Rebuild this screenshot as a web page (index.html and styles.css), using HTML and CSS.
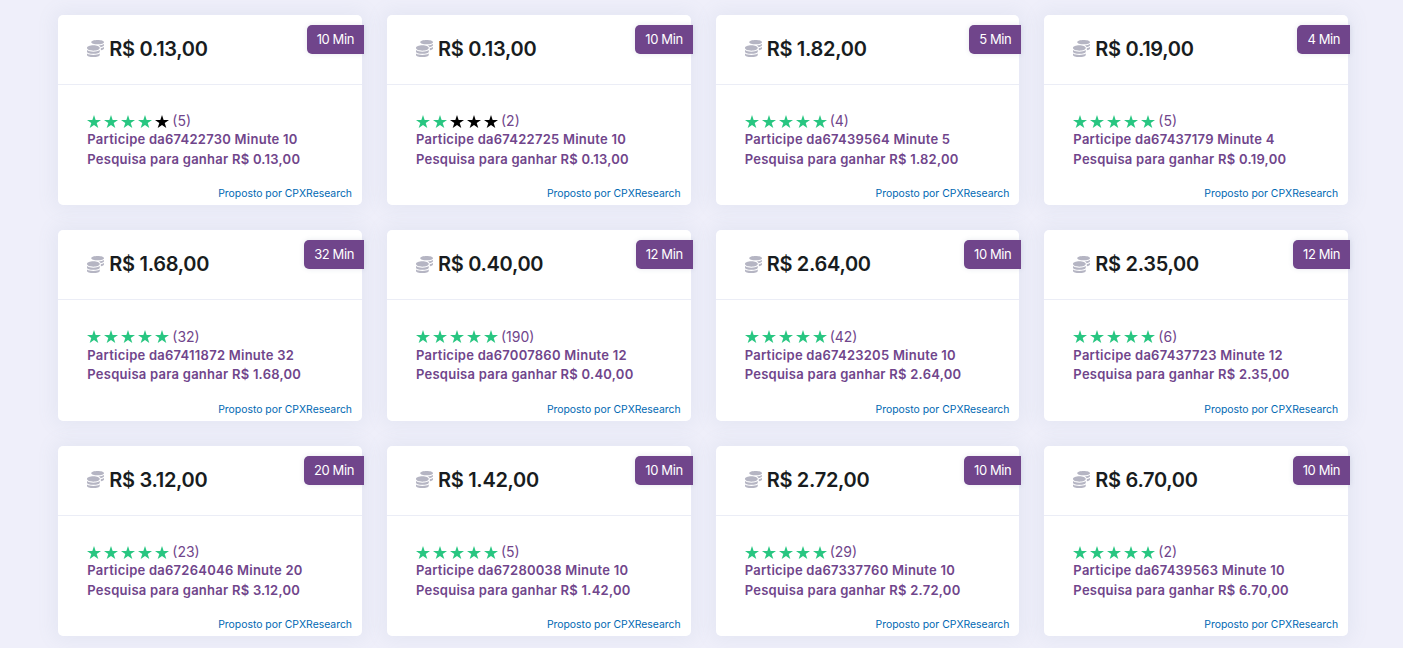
FILE: index.html
```
<!DOCTYPE html>
<html lang="pt">
    <head>
        <meta charset="UTF-8">
        <meta name="viewport" content="width=device-width, initial-scale=1.0">
        <title>Pesquisas</title>
        <link rel="stylesheet" href="styles.css">
    </head>
    <body>
        <!-- shared icons -->
        <svg class="icons" width="0" height="0">
            <symbol id="coins" viewBox="0 0 512 512">
                <path d="M0 405.3V448c0 35.3 86 64 192 64s192-28.7 192-64v-42.7C342.7 434.4 267.2 448 192 448S41.3 434.4 0 405.3zM320 128c106 0 192-28.7 192-64S426 0 320 0 128 28.7 128 64s86 64 192 64zM0 300.4V352c0 35.3 86 64 192 64s192-28.7 192-64v-51.6c-41.3 34-116.9 51.6-192 51.6S41.3 334.4 0 300.4zm416 11c57.3-11.1 96-31.7 96-55.4v-42.7c-23.2 16.4-57.3 27.6-96 34.5v63.6zM192 160C86 160 0 195.8 0 240s86 80 192 80 192-35.8 192-80-86-80-192-80zm219.3 56.3c60-10.8 100.7-32 100.7-56.3v-42.7c-35.5 25.1-96.5 38.6-160.7 41.8 29.5 14.3 51.2 33.5 60 57.2z"/>
            </symbol>
            <symbol id="star" viewBox="0 0 14 13">
                <path d="M7 0l1.65 4.95H14L9.7 8.05 11.3 13 7 9.95 2.7 13l1.6-4.95L0 4.95h5.35z"/>
            </symbol>
        </svg>

        <div class="surveys" id="surveys"></div>

        <script src="surveys.js"></script>
    </body>
</html>
```
FILE: styles.css
```
* {
    box-sizing: border-box;
}

body {
    margin: 0;
    background-color: #efeffa;
    color: #70458b;
    font-family: Inter, "Open Sans", sans-serif;
    font-size: 13px;
    height: 648px;
    overflow: hidden;
}

.icons {
    display: block;
}

.surveys {
    display: grid;
    grid-template-columns: repeat(4, 303.7px);
    grid-auto-rows: 190.6px;
    gap: 25px;
    padding: 14.7px 0 0 58.3px;
}

.card {
    position: relative;
    display: flex;
    flex-direction: column;
    background-color: #fff;
    border-radius: 5px;
    box-shadow: 0 0 18px 5px rgba(120, 140, 160, 0.08);
}

.card-head {
    display: flex;
    align-items: center;
    height: 70px;
    padding: 0 29px 1px;
    border-bottom: 1px solid #ebedf6;
}

.coins {
    width: 17px;
    height: 17px;
    margin-right: 5px;
    fill: #b5b5c3;
}

.amount {
    margin: 0;
    color: #181c20;
    font-size: 20px;
    font-weight: 600;
    letter-spacing: -0.3px;
    white-space: nowrap;
}

/* duration tag, hangs 2px over the right edge */
.badge {
    position: absolute;
    top: 10px;
    right: -2px;
    height: 29px;
    padding: 0 10px;
    border-radius: 5px 0 0 5px;
    background-color: #70458b;
    box-shadow: 0 0 5px rgba(82, 95, 127, 0.15);
    color: #fff;
    letter-spacing: -0.4px;
    line-height: 29px;
}

.card-body {
    flex: 1;
    padding: 26.4px 29px 0;
}

.rating {
    display: flex;
    align-items: center;
    gap: 3px;
    height: 19px;
    font-size: 14px;
}

.star {
    width: 14px;
    height: 13px;
    margin-top: 1px;
    fill: #000;
}

.star.on {
    fill: #28c681;
}

.text {
    margin: 0;
    font-weight: 600;
    letter-spacing: 0.25px;
    line-height: 19.6px;
    white-space: nowrap;
}

.card-foot {
    padding: 0 10px 4px;
    color: #0068b3;
    font-size: 10.4px;
    line-height: 15px;
    text-align: right;
}
```
FILE: surveys.js
```
// amount, minutes, stars, votes, survey id
var surveys = [
    ["0.13,00", 10, 4, 5, "67422730"],
    ["0.13,00", 10, 2, 2, "67422725"],
    ["1.82,00", 5, 5, 4, "67439564"],
    ["0.19,00", 4, 5, 5, "67437179"],
    ["1.68,00", 32, 5, 32, "67411872"],
    ["0.40,00", 12, 5, 190, "67007860"],
    ["2.64,00", 10, 5, 42, "67423205"],
    ["2.35,00", 12, 5, 6, "67437723"],
    ["3.12,00", 20, 5, 23, "67264046"],
    ["1.42,00", 10, 5, 5, "67280038"],
    ["2.72,00", 10, 5, 29, "67337760"],
    ["6.70,00", 10, 5, 2, "67439563"]
];

var html = "";
for (var i = 0; i < surveys.length; i++) {
    var s = surveys[i];
    var stars = "";
    for (var n = 0; n < 5; n++) {
        stars += '<svg class="star' + (n < s[2] ? " on" : "") + '"><use href="#star"/></svg>';
    }
    html += '<div class="card">' +
        '<div class="card-head"><svg class="coins"><use href="#coins"/></svg>' +
        '<h3 class="amount">R$ ' + s[0] + '</h3></div>' +
        '<span class="badge">' + s[1] + ' Min</span>' +
        '<div class="card-body">' +
        '<div class="rating">' + stars + '<span>(' + s[3] + ')</span></div>' +
        '<p class="text">Participe da' + s[4] + ' Minute ' + s[1] + '<br>' +
        'Pesquisa para ganhar R$ ' + s[0] + '</p></div>' +
        '<div class="card-foot">Proposto por CPXResearch</div>' +
        '</div>';
}
document.getElementById("surveys").innerHTML = html;
```
